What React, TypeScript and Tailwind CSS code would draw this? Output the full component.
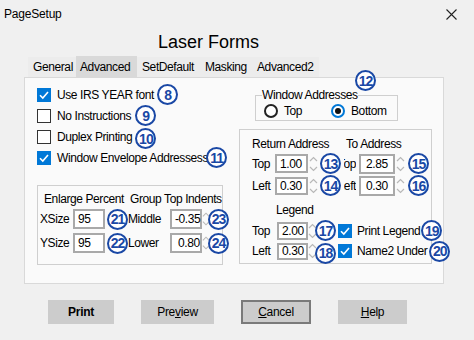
import React from "react";

const Badge = ({
  n,
  className = "",
  pos = "relative",
}: {
  n: number;
  className?: string;
  pos?: string;
}) => (
  <span
    className={
      pos +
      " z-10 flex h-[21px] w-[21px] shrink-0 items-center justify-center rounded-full border-2 border-[#1a48a5] bg-white text-[14px] font-bold leading-none tracking-[-1px] text-[#1a48a5] " +
      className
    }
  >
    {n}
  </span>
);

const CheckBox = ({ checked }: { checked: boolean }) =>
  checked ? (
    <svg width="14" height="14" viewBox="0 0 14 14" className="shrink-0">
      <rect width="14" height="14" fill="#0078d7" />
      <path d="M3 7.2 L5.8 10 L11 4" fill="none" stroke="#fff" strokeWidth="1.6" />
    </svg>
  ) : (
    <span className="h-[14px] w-[14px] shrink-0 border-[1.5px] border-[#333] bg-white" />
  );

const Spinner = ({ w = "w-[10px]" }: { w?: string }) => (
  <span className={"flex shrink-0 justify-center " + w}>
    <svg width="9" height="18" viewBox="0 0 9 18">
      <path d="M1 6 L4.5 2.5 L8 6" fill="none" stroke="#b8b8b8" strokeWidth="1.2" />
      <path d="M1 12 L4.5 15.5 L8 12" fill="none" stroke="#b8b8b8" strokeWidth="1.2" />
    </svg>
  </span>
);

const Field = ({ value, className }: { value: string; className: string }) => (
  <span
    className={
      "flex shrink-0 items-center border-2 border-[#a9a9a9] bg-white pl-[3px] " + className
    }
  >
    {value}
  </span>
);

// label partly hidden behind the badge in the screenshot: clip its left side
const ClippedLabel = ({ text }: { text: string }) => (
  <span className="ml-[3px] mr-[3px] flex w-[12px] shrink-0 justify-end overflow-hidden">
    <span className="shrink-0">{text}</span>
  </span>
);

const Radio = ({ on }: { on: boolean }) =>
  on ? (
    <span className="flex h-[14px] w-[14px] shrink-0 items-center justify-center rounded-full border-2 border-[#0078d7] bg-white">
      <span className="h-[6px] w-[6px] rounded-full bg-[#111]" />
    </span>
  ) : (
    <span className="h-[14px] w-[14px] shrink-0 rounded-full border-2 border-[#222] bg-white" />
  );

const tabs = [
  { name: "General", w: "w-[48px] pl-[5px]" },
  { name: "Advanced", w: "w-[61px] pl-[4px]" },
  { name: "SetDefault", w: "w-[61px] pl-[5px]" },
  { name: "Masking", w: "w-[54px] pl-[7px]" },
  { name: "Advanced2", w: "w-[67px] pl-[5px]" },
];

const options = [
  { label: "Use IRS YEAR font", checked: true, n: 8, badge: "ml-[3px]" },
  { label: "No Instructions", checked: false, n: 9, badge: "ml-[4px]" },
  { label: "Duplex Printing", checked: false, n: 10, badge: "ml-[3px] translate-y-[2px]" },
  { label: "Window Envelope Addressess", checked: true, n: 11, badge: "-ml-[2px]" },
];

export default function App() {
  return (
    <div className="h-[340px] w-[474px] overflow-hidden bg-[#f0f0f0] font-['Liberation_Sans',Arial,sans-serif] text-[12px] leading-[14px] tracking-[-0.4px] text-black">
      {/* title bar */}
      <div className="flex h-[28px] items-center justify-between pl-[4px] pr-[17px]">
        <span className="tracking-[-0.2px]">PageSetup</span>
        <svg width="11" height="11" viewBox="0 0 11 11">
          <path d="M0.5 0.5 L10.5 10.5 M10.5 0.5 L0.5 10.5" stroke="#222" strokeWidth="1.1" />
        </svg>
      </div>

      <div className="h-[29px] pl-[158px] pt-[3px] text-[18px] leading-[22px] tracking-normal">
        Laser Forms
      </div>

      {/* tabs */}
      <div className="flex h-[20px] items-stretch pl-[28px]">
        {tabs.map((t) => (
          <div
            key={t.name}
            className={
              "flex items-center " +
              t.w +
              (t.name === "Advanced" ? " -mt-[1px] bg-[#d9d9d9]" : " bg-[#ececec]")
            }
          >
            {t.name}
          </div>
        ))}
      </div>

      {/* tab page */}
      <div className="ml-[24px] flex h-[207px] w-[420px] border border-[#d9d9d9] bg-[#fafafa]">
        {/* left column */}
        <div className="w-[214px] shrink-0 pl-[12px] pt-[6px]">
          {options.map((o) => (
            <div key={o.label} className="flex h-[21px] items-center">
              <CheckBox checked={o.checked} />
              <span className="ml-[6px] shrink-0 whitespace-nowrap">{o.label}</span>
              <Badge n={o.n} className={o.badge} />
            </div>
          ))}

          <div className="mt-[17px] h-[80px] w-[186px] border border-[#cfcfcf] pt-[6px]">
            <div className="flex h-[14px] pl-[6px]">
              <span className="w-[86px] shrink-0">Enlarge Percent</span>
              <span className="shrink-0 whitespace-nowrap">Group Top Indents</span>
            </div>
            <div className="mt-[3px] flex h-[20px] items-center pl-[2px]">
              <span className="w-[33px] shrink-0">XSize</span>
              <Field value="95" className="h-[20px] w-[32px]" />
              <Badge n={21} className="ml-[2px]" />
              <span className="w-[42px] shrink-0">Middle</span>
              <Field value="-0.35" className="h-[20px] w-[32px]" />
              <Spinner w="w-[8px]" />
              <Badge n={23} className="-ml-[2px]" />
            </div>
            <div className="mt-[4px] flex h-[20px] items-center pl-[2px]">
              <span className="w-[33px] shrink-0">YSize</span>
              <Field value="95" className="h-[20px] w-[32px]" />
              <Badge n={22} className="ml-[2px]" />
              <span className="w-[42px] shrink-0">Lower</span>
              <Field value="0.80" className="h-[20px] w-[32px] pl-[6px]" />
              <Spinner w="w-[8px]" />
              <Badge n={24} className="-ml-[2px]" />
            </div>
          </div>
        </div>

        {/* right column */}
        <div className="w-[204px] shrink-0">
          <div className="relative ml-[16px] mt-[10px] w-[143px]">
            <fieldset className="h-[33px] border border-[#cfcfcf]">
              <legend className="ml-[6px] leading-[14px]">Window Addresses</legend>
              <div className="flex h-[17px] items-center pl-[8px]">
                <Radio on={false} />
                <span className="ml-[6px] w-[47px] shrink-0">Top</span>
                <Radio on={true} />
                <span className="ml-[6px] shrink-0">Bottom</span>
              </div>
            </fieldset>
            <Badge n={12} pos="absolute" className="-top-[18px] left-[100px]" />
          </div>

          <div className="mt-[8px] h-[135px] w-[193px] border border-[#cfcfcf] pl-[12px] pt-[7px]">
            <div className="flex h-[14px]">
              <span className="w-[94px] shrink-0">Return Address</span>
              <span className="shrink-0">To Address</span>
            </div>
            <div className="mt-[3px] flex h-[19px] items-center">
              <span className="w-[23px] shrink-0">Top</span>
              <Field value="1.00" className="h-[19px] w-[33px]" />
              <Spinner />
              <Badge n={13} className="ml-[2px]" />
              <ClippedLabel text="Top" />
              <Field value="2.85" className="h-[20px] w-[36px] pl-[5px]" />
              <Spinner />
              <Badge n={15} className="ml-[3px]" />
            </div>
            <div className="mt-[3px] flex h-[19px] items-center">
              <span className="w-[23px] shrink-0">Left</span>
              <Field value="0.30" className="h-[18px] w-[33px]" />
              <Spinner />
              <Badge n={14} className="ml-[2px]" />
              <ClippedLabel text="Left" />
              <Field value="0.30" className="h-[20px] w-[36px] pl-[5px]" />
              <Spinner />
              <Badge n={16} className="ml-[3px]" />
            </div>
            <div className="mt-[8px] h-[14px] pl-[24px]">Legend</div>
            <div className="mt-[4px] flex h-[19px] items-center">
              <span className="w-[25px] shrink-0">Top</span>
              <Field value="2.00" className="h-[18px] w-[31px]" />
              <Spinner w="w-[9px]" />
              <Badge n={17} className="-ml-[2px]" />
              <span className="ml-[2px] flex shrink-0 items-center">
                <CheckBox checked />
              </span>
              <span className="ml-[5px] shrink-0 whitespace-nowrap">Print Legend</span>
              <Badge n={19} className="ml-[1px]" />
            </div>
            <div className="mt-[2px] flex h-[18px] items-center">
              <span className="w-[25px] shrink-0">Left</span>
              <Field value="0.30" className="h-[17px] w-[31px]" />
              <Spinner w="w-[9px]" />
              <Badge n={18} className="-ml-[2px] translate-y-[2px]" />
              <span className="ml-[2px] flex shrink-0 items-center">
                <CheckBox checked />
              </span>
              <span className="ml-[5px] shrink-0 whitespace-nowrap">Name2 Under</span>
              <Badge n={20} className="ml-[2px]" />
            </div>
          </div>
        </div>
      </div>

      {/* buttons */}
      <div className="mt-[16px] flex gap-[27px] pl-[48px] tracking-[-0.3px]">
        <button className="h-[24px] w-[66px] bg-[#cccccc] font-bold">Print</button>
        <button className="h-[24px] w-[73px] bg-[#cccccc]">
          Pre<span className="underline">v</span>iew
        </button>
        <button className="h-[24px] w-[70px] border-2 border-[#7a7a7a] bg-[#cccccc]">
          <span className="underline">C</span>ancel
        </button>
        <button className="h-[24px] w-[69px] bg-[#cccccc]">
          <span className="underline">H</span>elp
        </button>
      </div>
    </div>
  );
}
